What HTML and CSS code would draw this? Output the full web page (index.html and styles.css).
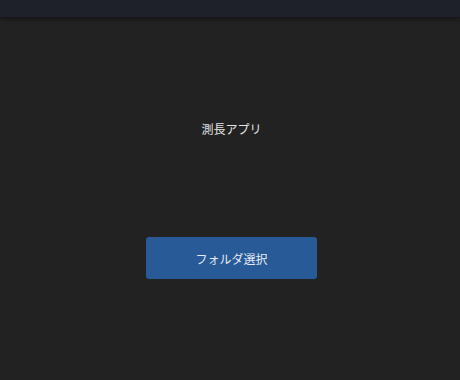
FILE: index.html
```html
<!DOCTYPE html>
<html lang="ja">
<head>
  <meta charset="UTF-8">
  <title>測長アプリ</title>
  <link rel="stylesheet" href="styles.css">
</head>
<body>
  <div class="topbar"></div>
  <div class="main">
    <h1 class="title">測長アプリ</h1>
    <button class="select-btn">フォルダ選択</button>
  </div>
</body>
</html>
```
FILE: styles.css
```css
html, body {
  margin: 0;
  padding: 0;
  height: 100%;
  background-color: #222222;
  font-family: "Noto Sans CJK JP", "Noto Sans", sans-serif;
}

.topbar {
  height: 17px;
  background-color: #1e2129;
  box-shadow: 0 2px 4px rgba(0, 0, 0, 0.45);
}

.main {
  display: flex;
  flex-direction: column;
  align-items: center;
  padding-left: 3px;
}

.title {
  margin: 102px 0 0 0;
  font-size: 12px;
  font-weight: normal;
  line-height: 20px;
  color: #e4e4e4;
}

.select-btn {
  margin-top: 98px;
  width: 171px;
  height: 42px;
  background-color: #275a96;
  color: #e6ecf4;
  border: none;
  border-radius: 3px;
  font-family: inherit;
  font-size: 12px;
  cursor: pointer;
}
```
